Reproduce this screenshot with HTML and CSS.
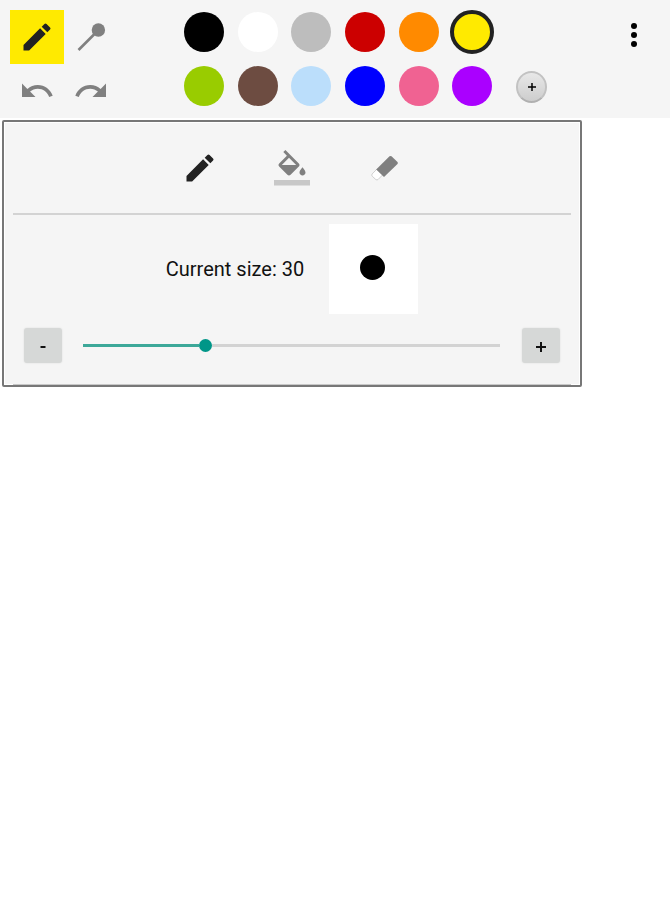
FILE: index.html
```html
<!DOCTYPE html>
<html lang="en">
<head>
<meta charset="utf-8">
<title>Paint</title>
<link rel="stylesheet" href="styles.css">
</head>
<body>
<header class="toolbar">
  <div class="tools">
    <button class="tool active" aria-label="Brush"><svg class="icon dark" viewBox="0 0 24 24"><path d="M3 17.25V21h3.75L17.81 9.94l-3.75-3.75L3 17.25zM20.71 7.04a1 1 0 0 0 0-1.41l-2.34-2.34a1 1 0 0 0-1.41 0l-1.83 1.83 3.75 3.75 1.83-1.83z"/></svg></button>
    <button class="tool" aria-label="Pin"><svg class="icon" viewBox="0 0 36 36"><path d="M5.5 31L22 14.5" stroke="#808080" stroke-width="2.6" fill="none"/><circle cx="25.4" cy="11" r="6.7"/></svg></button>
    <button class="tool" aria-label="Undo"><svg class="icon" viewBox="0 0 24 24"><path d="M12.5 8c-2.65 0-5.05.99-6.9 2.6L2 7v9h9l-3.62-3.62c1.39-1.16 3.16-1.88 5.12-1.88 3.54 0 6.55 2.31 7.6 5.5l2.37-.78C21.08 11.03 17.15 8 12.5 8z"/></svg></button>
    <button class="tool" aria-label="Redo"><svg class="icon" viewBox="0 0 24 24"><path d="M18.4 10.6C16.55 8.99 14.15 8 11.5 8c-4.65 0-8.58 3.03-9.96 7.22L3.9 16c1.05-3.19 4.05-5.5 7.6-5.5 1.95 0 3.73.72 5.12 1.88L13 16h9V7l-3.6 3.6z"/></svg></button>
  </div>
  <div class="swatches">
    <span class="swatch black"></span><span class="swatch white"></span><span class="swatch gray"></span><span class="swatch red"></span><span class="swatch orange"></span><span class="swatch yellow selected"></span>
    <span class="swatch green"></span><span class="swatch brown"></span><span class="swatch sky"></span><span class="swatch blue"></span><span class="swatch pink"></span><span class="swatch purple"></span>
  </div>
  <button class="add" aria-label="Add color"><svg viewBox="0 0 10 10"><path d="M1 5h8M5 1v8"/></svg></button>
  <button class="more" aria-label="More"><i></i><i></i><i></i></button>
</header>
<section class="panel">
  <div class="modes">
    <svg class="icon dark" viewBox="0 0 24 24"><path d="M3 17.25V21h3.75L17.81 9.94l-3.75-3.75L3 17.25zM20.71 7.04a1 1 0 0 0 0-1.41l-2.34-2.34a1 1 0 0 0-1.41 0l-1.83 1.83 3.75 3.75 1.83-1.83z"/></svg>
    <svg class="icon" viewBox="0 0 24 24"><path d="M16.56 8.94L7.62 0 6.21 1.41l2.38 2.38-5.15 5.15a1.49 1.49 0 0 0 0 2.12l5.5 5.5c.29.29.68.44 1.06.44s.77-.15 1.06-.44l5.5-5.5c.59-.58.59-1.53 0-2.12zM5.21 10L10 5.21 14.79 10H5.21zM19 11.5s-2 2.17-2 3.5c0 1.1.9 2 2 2s2-.9 2-2c0-1.33-2-3.5-2-3.5z"/><path fill="#c8c8c8" d="M0 20h24v3.6H0z"/></svg>
    <svg class="icon" viewBox="0 1.5 36 36"><path fill="#fff" stroke="#c4c4c4" stroke-width=".8" d="M11.3 20.2L6.2 25.4Q5.2 26.7 6.4 27.9L9.8 31Q11 32 12.2 30.9L17.3 25.7z"/><path d="M23.5 7.8q1-.8 2 0l6 5.6q.8 1 0 2L18 28.6 10.2 21.1z"/></svg>
  </div>
  <div class="size">
    <span class="label">Current size: 30</span>
    <div class="preview"><i></i></div>
  </div>
  <div class="slider-row">
    <button class="step"><svg viewBox="0 0 12 12"><path d="M3.5 6h5"/></svg></button>
    <div class="slider"><div class="filled"></div><div class="thumb"></div><div class="rest"></div></div>
    <button class="step"><svg viewBox="0 0 12 12"><path d="M1 6h10M6 1v10"/></svg></button>
  </div>
</section>
</body>
</html>
```
FILE: styles.css
```css
* { box-sizing: border-box; }
body { margin: 0; background: #fff; font-family: Roboto, sans-serif; color: #111; }
button { border: 0; padding: 0; background: none; }
svg { display: block; }

.toolbar { display: flex; height: 118px; padding-left: 10px; background: #f5f5f5; }
.tools { display: grid; grid-template: 54px 54px / 54px 54px; padding-top: 10px; }
.tool { display: flex; align-items: center; justify-content: center; }
.tool.active { background: #ffea00; }
.icon { width: 36px; height: 36px; fill: #808080; }
.dark { fill: #222; }

.swatches { display: grid; grid-template-columns: repeat(6, 40px); grid-auto-rows: 40px; gap: 14.4px 13.6px; margin: 12px 0 0 66.3px; }
.swatch { border-radius: 50%; }
.selected { margin: -2px; border: 4px solid #222; }
.black { background: #000; }
.white { background: #fff; }
.gray { background: #bdbdbd; }
.red { background: #c00; }
.orange { background: #ff8a00; }
.yellow { background: #ffea00; }
.green { background: #9c0; }
.brown { background: #6d4c41; }
.sky { background: #bbdefb; }
.blue { background: #00f; }
.pink { background: #f06292; }
.purple { background: #a0f; }

.add { width: 31px; height: 32px; margin: 71px 0 0 24px; border-radius: 50%; border: 2px solid #c2c2c2; border-bottom-color: #b0b0b0; background: linear-gradient(#e8e8e8, #cdcdcd); display: flex; align-items: center; justify-content: center; }
.add svg { width: 10px; stroke: #000; stroke-width: 1.5; }
.more { display: flex; flex-direction: column; gap: 3px; width: 6px; height: 24px; margin: 23px 0 0 84px; }
.more i { width: 6px; height: 6px; border-radius: 50%; background: #000; }

.panel { width: 580px; height: 267px; margin: 2px 0 0 2px; padding: 0 9px; border: 2px solid #777; border-radius: 2px; background: #f5f5f5; box-shadow: inset 0 0 0 1px #fff; }
.modes { display: flex; justify-content: center; align-items: center; gap: 56px; height: 93px; border-bottom: 2px solid #d3d3d3; }
.size { display: flex; align-items: center; justify-content: center; gap: 25px; height: 109px; }
.label { font-size: 20px; line-height: 24px; margin-bottom: 1px; white-space: nowrap; }
.preview { display: flex; align-items: center; justify-content: center; width: 89px; height: 90px; margin-bottom: 1px; padding: 0 2px 3px 0; background: #fff; }
.preview i { width: 25px; height: 25px; border-radius: 50%; background: #000; }
.slider-row { display: flex; align-items: center; justify-content: space-between; height: 61px; padding: 1px 11px 18px; border-bottom: 1px solid #c8c8c8; }
.step { display: flex; align-items: center; justify-content: center; width: 38px; height: 35px; border-radius: 3px; background: #d6d8d7; box-shadow: 0 0 2px #ddd; padding-top: 3px; }
.step svg { width: 12px; stroke: #111; stroke-width: 2; }
.slider { display: flex; align-items: center; width: 417px; margin-right: 2px; }
.filled { width: 116px; height: 3px; background: #3da899; }
.thumb { width: 13px; height: 13px; border-radius: 50%; background: #009688; }
.rest { flex: 1; height: 3px; background: #d3d3d3; }
```
